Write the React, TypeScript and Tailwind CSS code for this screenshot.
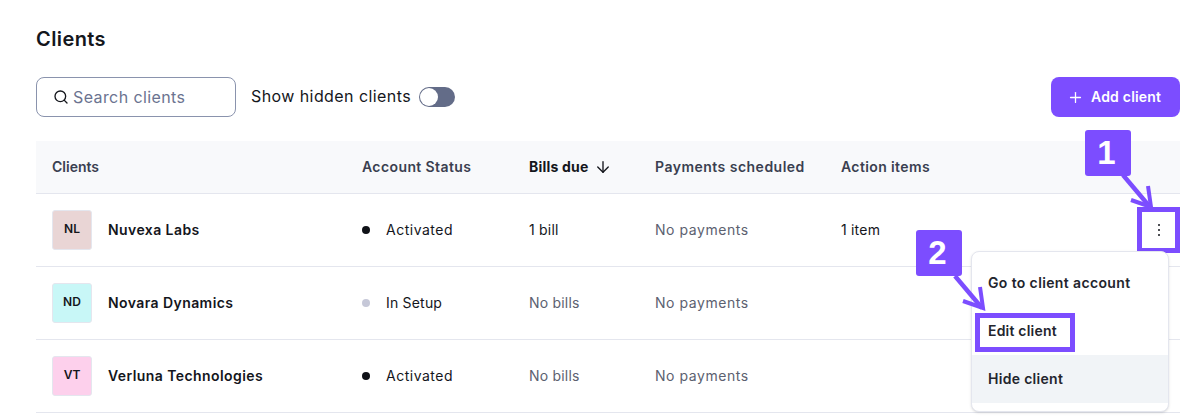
import { Search, Plus, ArrowDown } from "lucide-react";

const rows = [
  { i: "NL", name: "Nuvexa Labs", bg: "bg-[#e9d5d5]", status: "Activated", track: "tracking-[0.5px]", dot: "bg-[#101218]", bills: "1 bill", billsDark: true, action: "1 item" },
  { i: "ND", name: "Novara Dynamics", bg: "bg-[#c8f7f7]", status: "In Setup", track: "tracking-[0.2px]", dot: "bg-[#c6c8d8]", bills: "No bills", billsDark: false, action: "" },
  { i: "VT", name: "Verluna Technologies", bg: "bg-[#fdd0ec]", status: "Activated", track: "tracking-[0.5px]", dot: "bg-[#101218]", bills: "No bills", billsDark: false, action: "" },
];

function Badge({ n, className }: { n: string; className: string }) {
  return (
    <div className={"absolute flex h-[46px] w-[46px] items-center justify-center rounded-[3px] bg-[#7c4dff] pr-[3px] text-[33px] font-bold text-white font-['Liberation_Sans',sans-serif] " + className}>
      {n}
    </div>
  );
}

function Arrow({ className }: { className: string }) {
  return (
    <svg className={"absolute " + className} width="40" height="40" viewBox="0 0 40 40" fill="none" stroke="#7c4dff" strokeWidth="4.5">
      <path d="M3 1 L30 33" />
      <path d="M28 12 L31 33 L11 26" strokeWidth="4" />
    </svg>
  );
}

export default function App() {
  return (
    <div className="relative h-[417px] w-[1180px] overflow-hidden bg-white pl-9 font-['Inter',sans-serif] text-[#14161c]">
      <h1 className="pt-[26px] text-[20px] leading-[26px] font-semibold tracking-[0.4px] text-[#14161c]">Clients</h1>

      <div className="mt-[25px] flex h-10 items-center justify-between">
        <div className="flex items-center">
          <div className="flex h-10 w-[200px] items-center rounded-lg border border-[#8a93ad] pl-[16px]">
            <Search size={16} strokeWidth={2} className="text-[#14161c]" />
            <span className="ml-[4px] text-[16px] tracking-[0.4px] text-[#6b7390]">Search clients</span>
          </div>
          <span className="ml-[15px] pb-0.5 text-[16px] tracking-[0.42px] text-[#14161c]">Show hidden clients</span>
          <div className="ml-2 flex h-5 w-9 items-center rounded-full bg-[#636c88] pl-px">
            <div className="h-[18px] w-[18px] rounded-full bg-white" />
          </div>
        </div>
        <button className="flex h-10 w-[129px] items-center rounded-lg bg-[#7c4dff] pl-[16px] text-[14px] font-semibold text-white">
          <Plus size={17} strokeWidth={1.8} />
          <span className="ml-[7px] pb-0.5 tracking-[0.2px]">Add client</span>
        </button>
      </div>

      <div className="mt-6">
        <div className="flex h-[53px] items-center border-b border-[#e4e6ee] bg-[#f8f9fb] text-[14px] font-semibold text-[#3a3f50]">
          <div className="w-[326px] pb-0.5 pl-4">Clients</div>
          <div className="w-[167px] pb-0.5 tracking-[0.4px]">Account Status</div>
          <div className="flex w-[126px] items-center font-bold text-[#14161c]">
            <span className="pb-0.5 tracking-[0.2px]">Bills due</span>
            <ArrowDown size={18} strokeWidth={1.8} className="ml-[6px]" />
          </div>
          <div className="w-[186px] pb-0.5 tracking-[0.48px]">Payments scheduled</div>
          <div className="pb-0.5 tracking-[0.38px]">Action items</div>
        </div>
        {rows.map((r) => (
          <div key={r.i} className="flex h-[73px] items-center border-b border-[#e4e6ee] text-[14px]">
            <div className="flex w-[326px] items-center pl-4">
              <div className={"flex h-10 w-10 items-center justify-center rounded-[3px] border border-[#e4e6ee] pb-0.5 text-[12px] font-semibold " + r.bg}>{r.i}</div>
              <span className="ml-4 pb-0.5 font-semibold tracking-[0.42px]">{r.name}</span>
            </div>
            <div className={"flex w-[167px] items-center " + r.track}>
              <span className={"h-2 w-2 rounded-full " + r.dot} />
              <span className="ml-4 pb-0.5">{r.status}</span>
            </div>
            <div className={"w-[126px] pb-0.5 tracking-[0.2px] " + (r.billsDark ? "text-[#14161c]" : "text-[#5c6170]")}>{r.bills}</div>
            <div className="w-[186px] pb-0.5 tracking-[0.55px] text-[#5c6170]">No payments</div>
            <div className="pb-0.5 tracking-[0.2px]">{r.action}</div>
          </div>
        ))}
      </div>

      <div className="absolute left-[1137px] top-[207px] flex h-[46px] w-[43px] flex-col items-center justify-center gap-[3px] border-[5px] border-[#7c4dff]">
        <span className="h-[2px] w-[2px] rounded-full bg-[#14161c]" />
        <span className="h-[2px] w-[2px] rounded-full bg-[#14161c]" />
        <span className="h-[2px] w-[2px] rounded-full bg-[#14161c]" />
      </div>

      <div className="absolute left-[971px] top-[251px] w-[198px] rounded-lg border border-[#e4e6ee] bg-white py-2 text-[14px] font-semibold text-[#23252d] shadow-sm">
        <div className="flex h-12 items-center pb-1 pl-4 tracking-[0.37px]">Go to client account</div>
        <div className="flex h-12 items-center pb-1 pl-4 tracking-[0.2px]">Edit client</div>
        <div className="-mt-px flex h-12 items-center bg-[#f1f4f7] pb-0.5 pl-4 tracking-[0.3px]">Hide client</div>
      </div>
      <div className="absolute left-[975px] top-[313px] h-[39px] w-[100px] border-[5px] border-[#7c4dff]" />

      <Badge n="1" className="left-[1085px] top-[130px]" />
      <Arrow className="left-[1120px] top-[174px]" />
      <Badge n="2" className="left-[916px] top-[230px]" />
      <Arrow className="left-[952px] top-[275px]" />
    </div>
  );
}
